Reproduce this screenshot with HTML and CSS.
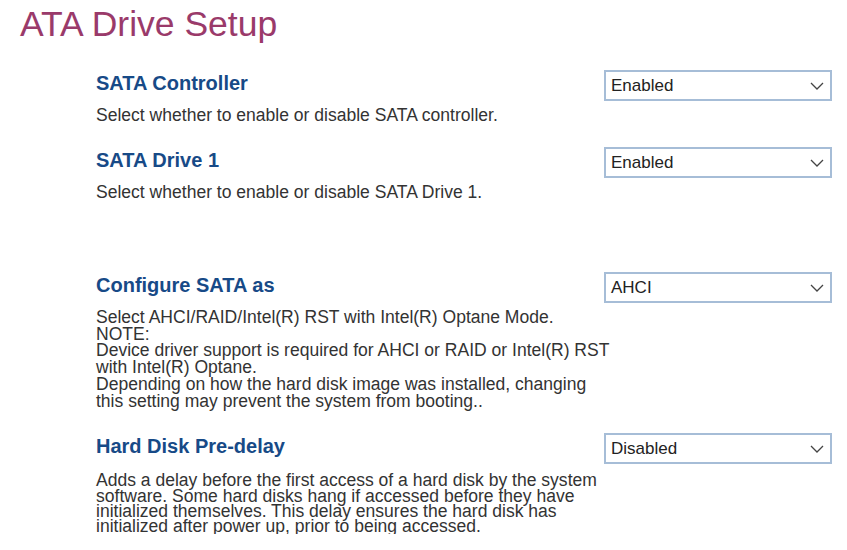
FILE: index.html
```html
<!DOCTYPE html>
<html lang="en">
<head>
<meta charset="utf-8">
<title>ATA Drive Setup</title>
<link rel="stylesheet" href="styles.css">
</head>
<body>
<h1 class="page-title">ATA Drive Setup</h1>
<div class="settings">
  <div class="setting">
    <h2 class="setting-name">SATA Controller</h2>
    <div class="select"><span>Enabled</span><svg class="chev" width="14" height="8" viewBox="0 0 14 8"><path d="M1 1 L7 7 L13 1" fill="none" stroke="#444" stroke-width="1.3"/></svg></div>
    <p class="setting-desc">Select whether to enable or disable SATA controller.</p>
  </div>
  <div class="setting">
    <h2 class="setting-name">SATA Drive 1</h2>
    <div class="select"><span>Enabled</span><svg class="chev" width="14" height="8" viewBox="0 0 14 8"><path d="M1 1 L7 7 L13 1" fill="none" stroke="#444" stroke-width="1.3"/></svg></div>
    <p class="setting-desc">Select whether to enable or disable SATA Drive 1.</p>
  </div>
  <div class="setting setting-spaced">
    <h2 class="setting-name">Configure SATA as</h2>
    <div class="select"><span>AHCI</span><svg class="chev" width="14" height="8" viewBox="0 0 14 8"><path d="M1 1 L7 7 L13 1" fill="none" stroke="#444" stroke-width="1.3"/></svg></div>
    <p class="setting-desc desc-lines">Select AHCI/RAID/Intel(R) RST with Intel(R) Optane Mode.<br>NOTE:<br>Device driver support is required for AHCI or RAID or Intel(R) RST<br>with Intel(R) Optane.<br>Depending on how the hard disk image was installed, changing<br>this setting may prevent the system from booting..</p>
  </div>
  <div class="setting">
    <h2 class="setting-name">Hard Disk Pre-delay</h2>
    <div class="select"><span>Disabled</span><svg class="chev" width="14" height="8" viewBox="0 0 14 8"><path d="M1 1 L7 7 L13 1" fill="none" stroke="#444" stroke-width="1.3"/></svg></div>
    <p class="setting-desc desc-tight">Adds a delay before the first access of a hard disk by the system software. Some hard disks hang if accessed before they have initialized themselves. This delay ensures the hard disk has initialized after power up, prior to being accessed.</p>
  </div>
</div>
</body>
</html>
```

FILE: styles.css
```css
html, body {
  margin: 0;
  padding: 0;
  background: #ffffff;
}

body {
  font-family: "Liberation Sans", Arial, sans-serif;
  color: #333333;
}

.page-title {
  margin: 5px 0 0 20px;
  font-size: 35.5px;
  font-weight: normal;
  line-height: 39px;
  color: #9a3a6a;
}

.settings {
  padding: 26px 0 0 96px;
  display: flex;
  flex-direction: column;
  gap: 24px;
}

.setting {
  display: grid;
  grid-template-columns: 508px 228px;
  align-items: start;
}

.setting-spaced {
  margin-top: 48px;
}

.setting-name {
  margin: 2px 0 0 0;
  font-size: 20px;
  line-height: 22px;
  font-weight: bold;
  color: #174a87;
}

.select {
  box-sizing: border-box;
  height: 31px;
  border: 2px solid #a6bdd7;
  display: flex;
  align-items: center;
  justify-content: space-between;
  padding: 0 5px 0 5px;
  font-size: 17px;
  color: #222222;
  background: #ffffff;
}

.chev {
  display: block;
  margin-right: 1px;
}

.setting-desc {
  grid-column: 1 / -1;
  max-width: 522px;
  margin: 6px 0 0 0;
  font-size: 17.55px;
  line-height: 16px;
  color: #333333;
}

.desc-lines {
  line-height: 16.7px;
}

.desc-tight {
  margin-top: 9px;
  line-height: 15.3px;
}
```
